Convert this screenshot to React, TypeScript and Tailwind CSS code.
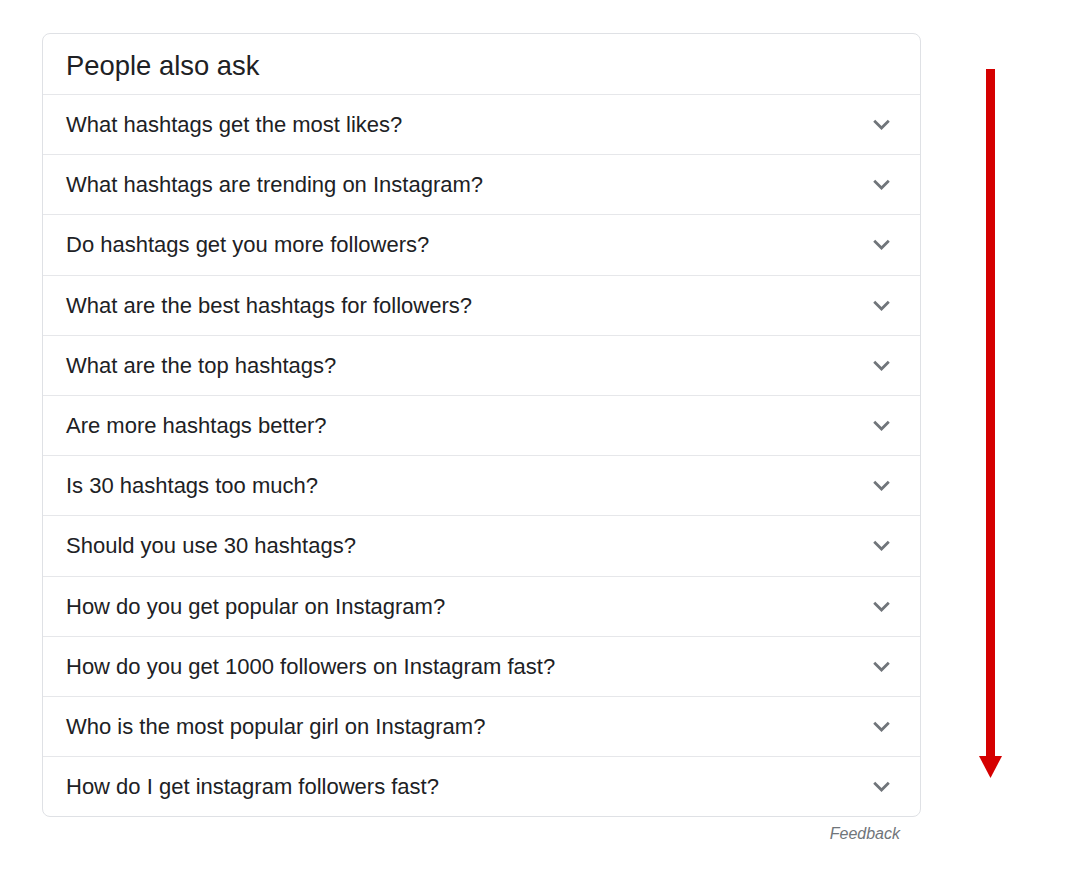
import { useState } from "react";

const QUESTIONS = [
  "What hashtags get the most likes?",
  "What hashtags are trending on Instagram?",
  "Do hashtags get you more followers?",
  "What are the best hashtags for followers?",
  "What are the top hashtags?",
  "Are more hashtags better?",
  "Is 30 hashtags too much?",
  "Should you use 30 hashtags?",
  "How do you get popular on Instagram?",
  "How do you get 1000 followers on Instagram fast?",
  "Who is the most popular girl on Instagram?",
  "How do I get instagram followers fast?",
] as const;

function Chevron({ open }: { open: boolean }) {
  return (
    <svg
      viewBox="0 0 24 24"
      className={open ? "w-[33px] h-[33px] rotate-180" : "w-[33px] h-[33px]"}
      fill="#70757a"
    >
      <path d="M16.59 8.59L12 13.17 7.41 8.59 6 10l6 6 6-6z" />
    </svg>
  );
}

export default function App() {
  const [open, setOpen] = useState<number | null>(null);

  return (
    <div className="min-h-[870px] bg-white font-['Liberation_Sans',Arial,sans-serif] pt-[33px] pl-[42px] flex">
      <div className="w-[879px]">
        <div className="rounded-[8px] border border-[#dfe1e5] overflow-hidden">
          <div className="h-[60px] flex items-center pt-[3px] px-[23px] text-[27.4px] text-[#202124]">
            People also ask
          </div>
          {QUESTIONS.map((q, i) => (
            <div
              key={q}
              onClick={() => setOpen(open === i ? null : i)}
              className="h-[60.2px] border-t border-[#e6e7ea] flex items-center justify-between pl-[23px] pr-[22px] cursor-pointer"
            >
              <span className="text-[22px] text-[#202124]">{q}</span>
              <Chevron open={open === i} />
            </div>
          ))}
        </div>
        <div className="flex justify-end pr-[21px] mt-[5px]">
          <span className="text-[16px] italic text-[#70757a]">Feedback</span>
        </div>
      </div>
      <svg width="23" height="709" viewBox="0 0 23 709" className="ml-[58px] mt-[36px] shrink-0">
        <rect x="7" y="0" width="9" height="690" fill="#d50000" />
        <polygon points="0,687 23,687 11.5,709" fill="#d50000" />
      </svg>
    </div>
  );
}
